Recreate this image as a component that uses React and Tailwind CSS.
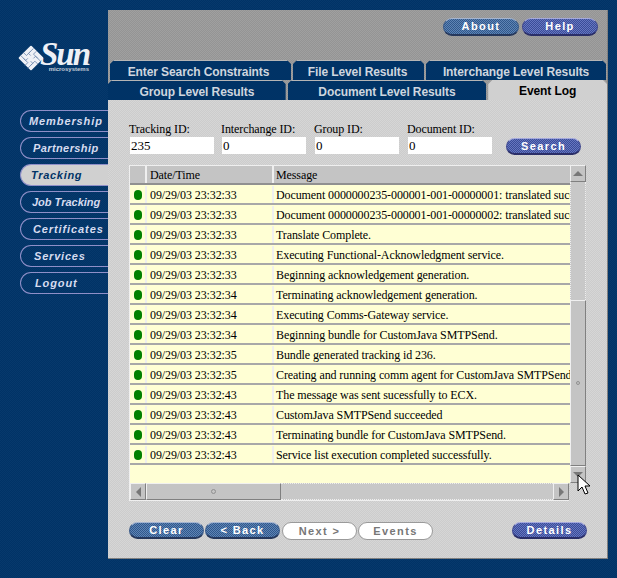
const rows = [
  ["09/29/03 23:32:33", "Document 0000000235-000001-001-00000001: translated successfully"],
  ["09/29/03 23:32:33", "Document 0000000235-000001-001-00000002: translated successfully"],
  ["09/29/03 23:32:33", "Translate Complete."],
  ["09/29/03 23:32:33", "Executing Functional-Acknowledgment service."],
  ["09/29/03 23:32:33", "Beginning acknowledgement generation."],
  ["09/29/03 23:32:34", "Terminating acknowledgement generation."],
  ["09/29/03 23:32:34", "Executing Comms-Gateway service."],
  ["09/29/03 23:32:34", "Beginning bundle for CustomJava SMTPSend."],
  ["09/29/03 23:32:35", "Bundle generated tracking id 236."],
  ["09/29/03 23:32:35", "Creating and running comm agent for CustomJava SMTPSend"],
  ["09/29/03 23:32:43", "The message was sent sucessfully to ECX."],
  ["09/29/03 23:32:43", "CustomJava SMTPSend succeeded"],
  ["09/29/03 23:32:43", "Terminating bundle for CustomJava SMTPSend."],
  ["09/29/03 23:32:43", "Service list execution completed successfully."],
];

const nav = [
  ["Membership", "pl-[8px] tracking-[0.9px]"],
  ["Partnership", "pl-[12px] tracking-[0.4px]"],
  ["Tracking", "pl-[10px] tracking-[0.7px]"],
  ["Job Tracking", "pl-[11px] tracking-[0px]"],
  ["Certificates", "pl-[12px] tracking-[0.9px]"],
  ["Services", "pl-[13px] tracking-[0.8px]"],
  ["Logout", "pl-[14px] tracking-[0.9px]"],
];

const btnTeal = "border-t-[#a4b4d0] border-x-[#3a5a88] border-b-[#26385c] bg-[repeating-conic-gradient(#30588c_0_25%,#5f84b4_0_50%)] bg-[length:2px_2px]";
const btnBlue = "border-t-[#a4a8dc] border-x-[#40488e] border-b-[#2a2e68] bg-[repeating-conic-gradient(#3a4c98_0_25%,#6676c0_0_50%)] bg-[length:2px_2px]";

function Btn({ label, tone, cls = "" }) {
  return (
    <div
      className={`h-[17px] w-[75px] shrink-0 rounded-full border border-b-2 flex items-center justify-center font-['Liberation_Sans',sans-serif] font-bold text-[11px] tracking-[1.4px] text-white ${tone} ${cls}`}
    >
      {label}
    </div>
  );
}

function GhostBtn({ label, cls = "" }) {
  return (
    <div className={`h-[18px] shrink-0 rounded-full border border-[#9a9a9a] bg-white flex items-center justify-center font-['Liberation_Sans',sans-serif] font-bold text-[11px] tracking-[1.4px] text-[#777] ${cls}`}>
      {label}
    </div>
  );
}

function Tab({ label, cls, active }) {
  return (
    <div
      className={`h-[20px] flex items-center justify-center pt-[2px] font-['Liberation_Sans',sans-serif] font-bold text-[12px] tracking-[-0.1px] [clip-path:polygon(4px_0,calc(100%-4px)_0,100%_4px,100%_100%,0_100%,0_4px)] ${
        active
          ? "bg-[#d0d0d0] text-black"
          : "bg-[#003366] text-[#cfd6df] border-t border-[#b5b5b5]"
      } ${cls}`}
    >
      {label}
    </div>
  );
}

function Field({ label, value, width }) {
  return (
    <div className={`flex flex-col ${width}`}>
      <span className="h-[14px] leading-[14px] text-[12px] tracking-[-0.1px] text-black font-['Liberation_Serif',serif] whitespace-nowrap">{label}</span>
      <div className="ml-[1px] mt-[1px] h-[17px] w-[84px] bg-white pl-[1px] leading-[17px] text-[13px] text-black font-['Liberation_Serif',serif]">{value}</div>
    </div>
  );
}

const raised = "border border-t-[#f0f0f0] border-l-[#f0f0f0] border-r-[#808080] border-b-[#808080] bg-[#c4c4c4]";

function ScrollBtn({ dir }) {
  const pts = { up: "1,7 11,7 6,2", down: "1,2 11,2 6,7", left: "7,1 7,11 2,6", right: "2,1 2,11 7,6" }[dir];
  const vertical = dir === "up" || dir === "down";
  return (
    <div className={`h-[17px] w-[16px] shrink-0 flex items-center justify-center ${raised}`}>
      <svg className={vertical ? "w-[12px] h-[9px]" : "w-[9px] h-[12px]"} viewBox={vertical ? "0 0 12 9" : "0 0 9 12"}>
        <polygon points={pts} fill="#777" />
      </svg>
    </div>
  );
}

export default function App() {
  return (
    <div className="relative flex h-[578px] w-[617px] overflow-hidden bg-[repeating-conic-gradient(#003366_0_25%,#07396c_0_50%)] bg-[length:2px_2px] pt-[10px] font-['Liberation_Sans',sans-serif]">
      {/* Sidebar */}
      <aside className="w-[108px] shrink-0">
        <div className="ml-[18px] mt-[33px] flex h-[29px] items-center">
          <svg width="26" height="28" viewBox="0 0 26 27" className="shrink-0">
            <g transform="rotate(45 13 13.5)">
              <rect x="4" y="4.5" width="18" height="18" rx="1" fill="#eef0f6" />
              <path d="M8 5v7h3M12 5v4h6M22 9h-7v3M22 13h-4v6M18 23v-7h-3M14 23v-4H8M4 19h7v-3M4 15h4V9" fill="none" stroke="#6f88ae" strokeWidth="0.8" />
            </g>
          </svg>
          <div className="ml-[1px] flex w-[44px] flex-col items-end">
            <span className="font-['Liberation_Serif',serif] italic font-bold text-[33px] leading-[24px] tracking-[-2px] text-[#eef0f6]">Sun</span>
            <span className="text-[6px] font-bold leading-[7px] text-[#c4ccd8]">microsystems</span>
          </div>
        </div>
        <nav className="mt-[38px] flex flex-col gap-[5px] pl-[20px]">
          {nav.map(([label, pad]) => {
            const active = label === "Tracking";
            return (
              <div
                key={label}
                className={`flex h-[22px] items-center rounded-l-full border-y border-l border-[#8f8fc8] text-[11px] font-bold italic whitespace-nowrap ${pad} ${
                  active ? "bg-[#d0d0d0] text-[#003366]" : "text-[#d6dcf0]"
                }`}
              >
                {label}
              </div>
            );
          })}
        </nav>
      </aside>

      {/* Panel */}
      <main className="flex h-[549px] w-[500px] shrink-0 flex-col border-r border-b border-[#808080] bg-[repeating-conic-gradient(#cccccc_0_25%,#d6d6d6_0_50%)] bg-[length:2px_2px]">
        <div className="bg-[repeating-conic-gradient(#949494_0_25%,#a0a0a0_0_50%)] bg-[length:2px_2px]">
          <div className="flex h-[50px] justify-end gap-[3px] pt-[8px] pr-[9px]">
            <Btn label="About" tone={btnTeal} cls="w-[76px] h-[18px]" />
            <Btn label="Help" tone={btnBlue} cls="w-[76px] h-[18px]" />
          </div>
          <div className="flex gap-[2px] pl-[2px] pr-[1px]">
            <Tab label="Enter Search Constraints" cls="w-[181px] pr-[4px]" />
            <Tab label="File Level Results" cls="w-[131px] pr-[2px]" />
            <Tab label="Interchange Level Results" cls="w-[180px]" />
          </div>
          <div className="flex gap-[2px]">
            <Tab label="Group Level Results" cls="w-[178px]" />
            <Tab label="Document Level Results" cls="w-[199px]" />
            <Tab label="Event Log" active cls="w-[119px]" />
          </div>
        </div>

        <div className="flex-1 pl-[21px]">
          {/* Search form */}
          <div className="mt-[22px] flex items-end">
            <Field label="Tracking ID:" value="235" width="w-[92px]" />
            <Field label="Interchange ID:" value="0" width="w-[93px]" />
            <Field label="Group ID:" value="0" width="w-[93px]" />
            <Field label="Document ID:" value="0" width="w-[99px]" />
            <Btn label="Search" tone={btnBlue} cls="mb-[-1px]" />
          </div>

          {/* Grid + scrollbars */}
          <div className="mt-[11px] w-[457px]">
            <div className="flex">
              <div className="flex h-[318px] w-[441px] shrink-0 flex-col overflow-hidden border-l border-t border-[#efefef] bg-[#ffffd4]">
                <div className="flex h-[19px] shrink-0 border-b-2 border-[#909090] bg-[#c4c4c4] text-[12px] tracking-[-0.1px] font-['Liberation_Serif',serif] text-black">
                  <div className="w-[17px] shrink-0 border-r-2 border-[#efefef]" />
                  <div className="w-[127px] shrink-0 border-r-2 border-[#efefef] pl-[3px] leading-[18px]">Date/Time</div>
                  <div className="pl-[2px] leading-[18px]">Message</div>
                </div>
                {rows.map(([time, msg], i) => (
                  <div key={i} className="flex h-[20px] shrink-0 border-b-2 border-[#a8a8a8] pt-[1px] text-[12px] tracking-[-0.1px] font-['Liberation_Serif',serif] text-black whitespace-nowrap leading-[18px]">
                    <div className="flex w-[17px] shrink-0 items-center justify-center border-r-2 border-[#efefef] pl-[1px]">
                      <span className="h-[10px] w-[8px] rounded-full bg-[#008000]" />
                    </div>
                    <div className="w-[127px] shrink-0 border-r-2 border-[#efefef] pl-[3px]">{time}</div>
                    <div className="min-w-0 flex-1 overflow-hidden pl-[2px]">{msg}</div>
                  </div>
                ))}
              </div>
              <div className="flex h-[318px] w-[16px] shrink-0 flex-col">
                <ScrollBtn dir="up" />
                <div className="h-[118px] w-[16px] shrink-0 border-x border-dotted border-[#eeeeee] bg-[#c8c8c8]" />
                <div className={`flex h-[166px] w-[16px] shrink-0 items-center justify-center ${raised}`}>
                  <span className="h-[4px] w-[4px] rounded-full border border-[#909090]" />
                </div>
                <ScrollBtn dir="down" />
              </div>
            </div>
            <div className="flex h-[18px] w-[440px] border-l border-b border-[#efefef]">
              <ScrollBtn dir="left" />
              <div className={`flex h-[17px] w-[135px] shrink-0 items-center justify-center ${raised}`}>
                <span className="h-[5px] w-[5px] rounded-full border border-[#909090]" />
              </div>
              <div className="h-[17px] min-w-0 flex-1 border-y border-dotted border-[#eeeeee] bg-[#c8c8c8]" />
              <ScrollBtn dir="right" />
            </div>
          </div>

          {/* Bottom buttons */}
          <div className="mt-[21px] flex w-[458px] items-start">
            <Btn label="Clear" tone={btnTeal} />
            <Btn label="< Back" tone={btnTeal} cls="ml-[1px]" />
            <GhostBtn label="Next >" cls="ml-[2px] w-[75px]" />
            <GhostBtn label="Events" cls="ml-[1px] w-[75px]" />
            <Btn label="Details" tone={btnBlue} cls="ml-auto" />
          </div>
        </div>
      </main>

      {/* Mouse pointer */}
      <svg className="absolute left-[577px] top-[474px]" width="14" height="22" viewBox="0 0 14 22">
        <path d="M1 1v16l4-4 3 7 3-1-3-7h5z" fill="#fff" stroke="#000" strokeWidth="1" />
      </svg>
    </div>
  );
}
